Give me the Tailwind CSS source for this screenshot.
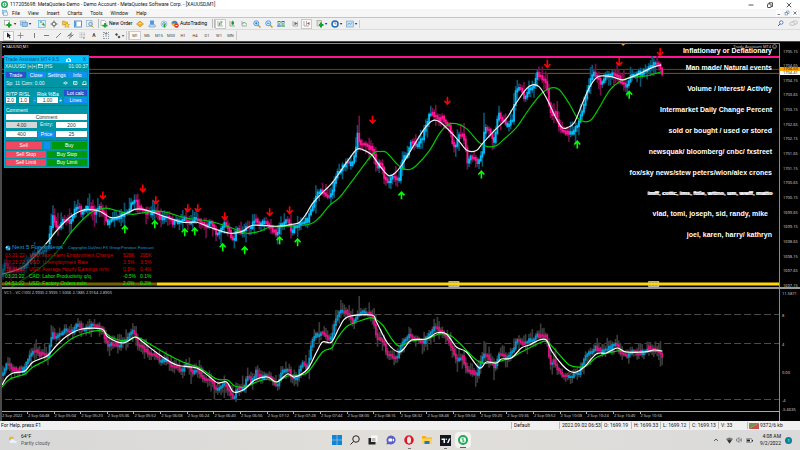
<!DOCTYPE html>
<html lang="en">
  <head>
    <meta charset="UTF-8" />
    <meta name="viewport" content="width=device-width, initial-scale=1.0" />
    <script src="https://cdn.jsdelivr.net/npm/@tailwindcss/browser@4"></script>
    <title>MetaTrader - XAUUSD,M1</title>
  </head>
  <body class="flex h-screen flex-col overflow-hidden bg-black font-['Roboto',sans-serif] text-[5px] leading-[7px] text-[#111]">
    <!-- Title bar -->
    <header class="flex h-[9px] shrink-0 items-center bg-white pl-px">
      <svg class="size-[7px]" viewBox="0 0 14 14"><circle cx="7" cy="7" r="5.5" fill="#fff" stroke="#22a85a" stroke-width="3" /><path d="M7 4v6M5 7h4" stroke="#22a85a" stroke-width="1.5" /></svg>
      <h1 class="ml-[2px] grow whitespace-nowrap">117205698: MetaQuotes-Demo - Demo Account - MetaQuotes Software Corp. - [XAUUSD,M1]</h1>
      <div class="flex gap-[13px] pr-2">
        <button aria-label="Minimize"><svg class="size-[6px]" viewBox="0 0 12 12"><path d="M1 6h10" stroke="#222" stroke-width="1.5" /></svg></button>
        <button aria-label="Restore"><svg class="size-[6px]" viewBox="0 0 12 12" fill="none" stroke="#222" stroke-width="1.5"><rect x="1" y="4" width="7" height="7" rx="1" /><path d="M4 4V1.5h7V9H8" /></svg></button>
        <button aria-label="Close"><svg class="size-[6px]" viewBox="0 0 12 12"><path d="M1.5 1.5l9 9m0-9l-9 9" stroke="#222" stroke-width="1.5" /></svg></button>
      </div>
    </header>

    <!-- Menu -->
    <nav class="flex h-[9px] shrink-0 items-center gap-2 border-b border-[#c4c4c4] bg-[#f6f6f6] pl-[2px]">
      <svg class="-mr-1 size-[6px]" viewBox="0 0 12 12"><rect x="1" y="1" width="8" height="7" fill="#cfe6fb" stroke="#4a90d0" /><rect x="3" y="4" width="8" height="7" fill="#e8f3fd" stroke="#4a90d0" /></svg>
      <a href="#">File</a><a href="#">View</a><a href="#">Insert</a><a href="#">Charts</a><a href="#">Tools</a><a href="#">Window</a><a href="#">Help</a>
      <div class="ml-auto flex gap-[2px] pr-[2px] text-[#3d5c80]">
        <button class="bg-white" aria-label="Minimize chart"><svg class="size-[6px]" viewBox="0 0 12 12"><path d="M3 9h5" stroke="currentColor" stroke-width="1.5" /></svg></button>
        <button class="bg-white" aria-label="Restore chart"><svg class="size-[6px]" viewBox="0 0 12 12" fill="none" stroke="currentColor"><rect x="2" y="5" width="5" height="5" /><path d="M5 5V2h5v5H7" /></svg></button>
        <button class="bg-white" aria-label="Close chart"><svg class="size-[6px]" viewBox="0 0 12 12"><path d="M3 3l6 6m0-6l-6 6" stroke="currentColor" stroke-width="1.5" /></svg></button>
      </div>
    </nav>

    <!-- Main toolbar -->
    <div class="flex h-[12px] shrink-0 items-center border-b border-[#dcdcdc] bg-[#f0f0f0] pl-[4px]">
      <button class="flex w-[16px] items-center" aria-label="New chart"><svg class="size-2" viewBox="0 0 16 16"><rect x="1" y="1" width="10" height="9" fill="#fff" stroke="#789" /><path d="M10 5v10M5 10h10" stroke="#12a526" stroke-width="4" /></svg><span class="ml-[2px] text-[4px]">▾</span></button>
      <button class="flex w-[18px] items-center" aria-label="Profiles"><svg class="size-2" viewBox="0 0 16 16"><rect x="1" y="2" width="11" height="8" fill="#d5e8f8" stroke="#5a96c8" /><rect x="4" y="5" width="11" height="8" fill="#9cc6ea" stroke="#3b7cb5" /></svg><span class="ml-px text-[4px]">▾</span></button>
      <button class="w-[12px]" aria-label="Market watch"><svg class="size-2" viewBox="0 0 16 16"><rect x="1" y="1" width="14" height="14" fill="#d9f0ff" stroke="#35a0e0" /><path d="M3 5l3-3 3 3zM8 8h5v5z" fill="#12a526" /><path d="M7 9l5-4v5z" fill="#e0561f" /></svg></button>
      <button class="w-[12px]" aria-label="Data window"><svg class="size-2" viewBox="0 0 16 16" fill="none" stroke="#555"><circle cx="8" cy="8" r="4" stroke-width="1.5" /><path d="M8 1v5M8 10v5M1 8h5M10 8h5" stroke-width="1.5" /></svg></button>
      <button class="w-[12px]" aria-label="Navigator"><svg class="size-2" viewBox="0 0 16 16"><path d="M1 2h4l1 2h5v6H1z" fill="#f4c542" stroke="#b88a1a" /><path d="M10 6l2 3h3l-2 2 1 4-4-2-4 2 1-4-2-2h3z" fill="#ffe14a" stroke="#b88a1a" /></svg></button>
      <button class="w-[12px]" aria-label="Terminal"><svg class="size-2" viewBox="0 0 16 16"><rect x="1" y="2" width="14" height="12" fill="#fff" stroke="#2673bf" stroke-width="1.5" /><path d="M1 3h4v10H1z" fill="#579dde" /></svg></button>
      <button class="w-[12px]" aria-label="Strategy tester"><svg class="size-2" viewBox="0 0 16 16"><rect x="1" y="1" width="11" height="12" fill="#e6f0f8" stroke="#7b9ab5" /><circle cx="9" cy="8" r="3.5" fill="#cdeafc" stroke="#4585b8" stroke-width="1.5" /><path d="M11 11l4 4" stroke="#c79621" stroke-width="2" /></svg></button>
      <span class="h-[9px] w-[2px] border-l border-[#bbb]"></span>
      <button class="flex w-[36px] items-center gap-px whitespace-nowrap text-black"><svg class="size-2" viewBox="0 0 16 16"><path d="M2 1h7l3 3v7H2z" fill="#fff" stroke="#789" /><path d="M10 6v9M5 11h10" stroke="#12a526" stroke-width="3.5" /></svg>New Order</button>
      <button class="w-[12px]" aria-label="Editor"><svg class="size-2" viewBox="0 0 16 16"><path d="M1 8l7-6 7 6-7 6z" fill="#f0b12c" stroke="#ba7b10" /><path d="M4 8l4-3 4 3z" fill="#ffe38a" /></svg></button>
      <button class="w-[12px]" aria-label="Hosting"><svg class="size-2" viewBox="0 0 16 16"><rect x="4" y="1" width="8" height="8" fill="#4d9be6" /><path d="M2 13a3 3 0 013-4h6a3 3 0 013 5H2z" fill="#b9d9f3" stroke="#4484bb" /></svg></button>
      <button class="w-[11px]" aria-label="Signals"><svg class="size-2" viewBox="0 0 16 16" fill="none"><circle cx="8" cy="8" r="6" stroke="#86b4d8" stroke-width="1.5" /><circle cx="8" cy="8" r="3" stroke="#4c96cd" stroke-width="1.5" /><path d="M9 7v8" stroke="#24a53a" stroke-width="3" /></svg></button>
      <button class="flex w-[41px] items-center gap-px whitespace-nowrap text-black"><svg class="size-2 shrink-0" viewBox="0 0 16 16"><circle cx="7" cy="7" r="6" fill="#f1bb38" /><path d="M1 7a6 5 0 0112 0z" fill="#3a84c5" /><circle cx="11" cy="11" r="4.5" fill="#e12d1d" /><rect x="9" y="10" width="4" height="2" fill="#fff" /></svg>AutoTrading</button>
      <span class="h-[9px] w-[3px] border-x border-[#bbb]"></span>
      <button class="flex h-[10px] w-[11px] items-center justify-center border border-[#c8c8c8] bg-[#fafafa]" aria-label="Bar chart"><svg class="size-[7px] shrink-0" viewBox="0 0 14 14" fill="none"><path d="M2 2v10h10" stroke="#666" /><path d="M5 5v6M8 2v8M8 4h3" stroke="#179b2b" stroke-width="1.5" /></svg></button>
      <button class="flex w-[12px] justify-center" aria-label="Candlesticks"><svg class="size-[7px]" viewBox="0 0 14 14"><path d="M2 2v10h10" stroke="#666" fill="none" /><path d="M7 1v10" stroke="#179b2b" /><rect x="5" y="3" width="5" height="6" fill="#179b2b" /></svg></button>
      <button class="flex w-[12px] justify-center" aria-label="Line chart"><svg class="size-[7px]" viewBox="0 0 14 14" fill="none"><path d="M2 2v10h10" stroke="#666" /><path d="M3 8c2-5 5-3 9 1" stroke="#179b2b" stroke-width="1.5" /></svg></button>
      <button class="ml-px flex w-[12px] justify-center" aria-label="Zoom in"><svg class="size-2" viewBox="0 0 16 16"><path d="M9 9l6 6" stroke="#d1a11c" stroke-width="3" /><circle cx="6.5" cy="6.5" r="5" fill="#d3ecff" stroke="#3180d6" stroke-width="1.5" /><path d="M4 6.5h5M6.5 4v5" stroke="#1767bd" stroke-width="1.5" /></svg></button>
      <button class="flex w-[12px] justify-center" aria-label="Zoom out"><svg class="size-2" viewBox="0 0 16 16"><path d="M9 9l6 6" stroke="#d1a11c" stroke-width="3" /><circle cx="6.5" cy="6.5" r="5" fill="#d3ecff" stroke="#3180d6" stroke-width="1.5" /><path d="M4 6.5h5" stroke="#1767bd" stroke-width="1.5" /></svg></button>
      <button class="flex w-[12px] justify-center" aria-label="Tile windows"><svg class="size-2" viewBox="0 0 16 16"><path d="M1 2h6v5H1zM9 9h6v5H9z" fill="#26a330" /><path d="M9 2h6v5H9zM1 9h6v5H1z" fill="#2a66c8" /><path d="M2 5h4M10 5h4M2 12h4M10 12h4" stroke="#fff" stroke-width="1.5" /></svg></button>
      <button class="ml-[2px] flex w-[12px] justify-center" aria-label="Auto scroll"><svg class="size-[7px]" viewBox="0 0 14 14"><path d="M2 2v10h10" stroke="#666" fill="none" /><path d="M5 4v6M11 3v8" stroke="#666" /><path d="M6 4l5 3-5 3z" fill="#179b2b" /></svg></button>
      <button class="flex h-[10px] w-[11px] items-center justify-center border border-[#c8c8c8] bg-[#fafafa]" aria-label="Chart shift"><svg class="size-[7px] shrink-0" viewBox="0 0 14 14"><path d="M2 2v10h10" stroke="#666" fill="none" /><path d="M7 2v9" stroke="#666" /><path d="M13 4l-5 3 5 3z" fill="#b5432c" /></svg></button>
      <button class="ml-1 flex w-[15px] items-center" aria-label="Indicators"><svg class="size-2" viewBox="0 0 16 16"><rect x="2" y="1" width="9" height="11" fill="#ddd" stroke="#888" /><path d="M10 5v10M6 10h9" stroke="#12a526" stroke-width="4" /></svg><span class="ml-px text-[4px]">▾</span></button>
      <button class="flex w-[15px] items-center" aria-label="Periods"><svg class="size-2" viewBox="0 0 16 16"><circle cx="8" cy="8" r="6" fill="#fff" stroke="#1b6dc2" stroke-width="3" /><path d="M8 4v4h3" fill="none" stroke="#333" /></svg><span class="ml-px text-[4px]">▾</span></button>
      <button class="flex w-[14px] items-center border-r border-[#ccc]" aria-label="Templates"><svg class="size-2" viewBox="0 0 16 16"><rect x="1" y="2" width="14" height="12" fill="#c8e0f5" stroke="#5d8cb5" /><path d="M3 10l3-4 3 3 4-5" fill="none" stroke="#3378b8" /></svg><span class="ml-px text-[4px]">▾</span></button>
      <button class="ml-auto w-[12px]" aria-label="Search"><svg class="size-[7px]" viewBox="0 0 14 14"><circle cx="8.5" cy="5" r="3.5" fill="#fff" stroke="#2861c2" stroke-width="1.5" /><path d="M6 8l-4 4" stroke="#2861c2" stroke-width="2" /></svg></button>
      <button class="mr-[2px] w-[9px]" aria-label="Chat"><svg class="h-[7px] w-[9px]" viewBox="0 0 18 14" fill="#eee" stroke="#999"><ellipse cx="12" cy="5" rx="5" ry="3.5" /><ellipse cx="6.5" cy="7.5" rx="5" ry="3.5" /></svg></button>
    </div>

    <!-- Drawing tools and periods -->
    <div class="flex h-[11px] shrink-0 items-center bg-[#f0f0f0] pl-[3px] text-[#444]">
      <button class="flex h-[10px] w-[11px] items-center justify-center border border-[#c8c8c8] bg-[#fafafa]" aria-label="Cursor"><svg class="size-[7px] shrink-0" viewBox="0 0 14 14"><path d="M4 1v10l3-2 2 4 2-1-2-4h3z" fill="#222" /></svg></button>
      <button class="flex w-[12px] justify-center" aria-label="Crosshair"><svg class="size-[7px]" viewBox="0 0 14 14"><path d="M7 1v12M1 7h12" stroke="#777" stroke-width="1.5" /></svg></button>
      <button class="ml-[2px] flex w-[12px] justify-center" aria-label="Vertical line"><svg class="size-[7px]" viewBox="0 0 14 14"><path d="M7 2v10" stroke="#555" stroke-width="1.5" /></svg></button>
      <button class="flex w-[12px] justify-center" aria-label="Horizontal line"><svg class="size-[7px]" viewBox="0 0 14 14"><path d="M2 7h10" stroke="#555" stroke-width="1.5" /></svg></button>
      <button class="flex w-[12px] justify-center" aria-label="Trendline"><svg class="size-[7px]" viewBox="0 0 14 14"><path d="M2 12L12 2" stroke="#555" stroke-width="1.5" /></svg></button>
      <button class="flex w-[12px] justify-center" aria-label="Channel"><svg class="size-[7px]" viewBox="0 0 14 14" fill="none" stroke="#555" stroke-width="1.5"><path d="M1 9l9-8M4 13l9-8M3 7l6 1M6 4l5 3" /></svg></button>
      <button class="flex w-[12px] justify-center" aria-label="Fibonacci"><svg class="size-[7px]" viewBox="0 0 14 14" fill="none" stroke="#888"><path d="M1 2h12M1 5h12M1 8h12M1 11h8" stroke-dasharray="2 1" /><path d="M10 10v4" stroke-width="2" /></svg></button>
      <button class="w-[12px] font-bold">A</button>
      <button class="flex w-[12px] justify-center" aria-label="Label"><span class="border border-dotted border-[#999] px-px leading-[5px]">T</span></button>
      <button class="flex w-[14px] items-center pl-[2px]" aria-label="Arrows"><svg class="size-[7px]" viewBox="0 0 14 14"><path d="M2 5l3-3 3 3-3 3zM7 10l3-3 3 3-3 3z" fill="#444" /></svg><span class="ml-px text-[4px]">▾</span></button>
      <span class="h-[9px] w-[3px] border-x border-[#ccc]"></span>
      <div class="flex border-r border-[#ccc] text-[4px]">
        <button class="w-[12px] border border-[#ccc] bg-[#fafafa]">M1</button><button class="w-[12px]">M5</button><button class="w-[12px]">M15</button><button class="w-[12px]">M30</button><button class="w-[12px]">H1</button><button class="w-[12px]">H4</button><button class="w-[12px]">D1</button><button class="w-[12px]">W1</button><button class="w-[11px]">MN</button>
      </div>
    </div>

    <!-- Charts -->
    <main class="flex min-h-0 flex-1 flex-col border-t border-l-2 border-[#4a4a4a] bg-black font-['Open_Sans',sans-serif] text-[4px] leading-[5px] text-[#ddd]">
      <section class="relative flex min-h-0 flex-[245]">
        <div class="relative mt-px flex-1 border-t border-r border-[#8a8a8a]">
          <svg id="price" class="absolute inset-0 size-full" viewBox="2 43 778 244" preserveAspectRatio="none" fill="none"></svg>
          <p class="absolute top-0 left-px text-white">▾ XAUUSD,M1</p>
          <p class="absolute top-0 right-[2px] flex items-center gap-px leading-[4px] whitespace-nowrap">Trade Assistant MT4 <svg class="size-[5px]" viewBox="0 0 10 10" fill="none" stroke="#ccc"><circle cx="5" cy="5" r="4" /><path d="M3 6q2 2 4 0M3.5 3.5v1M6.5 3.5v1" /></svg></p>

          <!-- Notes -->
          <ul class="absolute top-[3px] right-[7px] text-right font-['Liberation_Sans',sans-serif] text-[7px] leading-[8px] font-bold whitespace-nowrap text-white">
            <li class="mb-[9px]">Inflationary or Deflationary</li>
            <li class="mb-[13px]">Man made/ Natural events</li>
            <li class="mb-[13px]">Volume / Interest/ Activity</li>
            <li class="mb-[13px]">Intermarket Daily Change Percent</li>
            <li class="mb-[13px]">sold or bought / used or stored</li>
            <li class="mb-[13px]">newsquak/ bloomberg/ cnbc/ fxstreet</li>
            <li class="mb-[12px]">fox/sky news/stew peters/wion/alex crones</li>
            <li class="mb-[13px] text-[6px] [text-shadow:1px_0_#fff]">imff, cottc, ims, fttle, wttno, um, wwff, matto</li>
            <li class="mr-1 mb-[13px]">vlad, tomi, joseph, sid, randy, mike</li>
            <li>joel, karen, harry/ kathryn</li>
          </ul>

          <!-- News -->
          <div class="absolute bottom-0 left-0 w-[155px] bg-black/55 pl-[3px] font-['Liberation_Sans',sans-serif] text-[5px] leading-[7px] whitespace-nowrap">
            <div class="flex items-center text-[#1b9fd8]">
              <svg class="size-[6px]" viewBox="0 0 12 12"><circle cx="6" cy="6" r="5" fill="#167db5" /><path d="M3 2l3 2-2 3-3-2zM7 6l3 1-2 4z" fill="#a9dcf5" /></svg>
              <h2 class="ml-px w-[56px] text-[6px]">Next 5 Forex News</h2>
              <span class="w-[53px] text-[4px]">Copyrights DaVinci FX Group</span>
              <span class="w-[17px] text-[4px]">Previous</span><span class="text-[4px]">Forecast</span>
            </div>
            <table class="mt-px w-full text-left">
              <tbody class="text-[#d80000]">
                <tr><td class="w-[24px]">03:21:22</td><td>USD: Non-Farm Employment Change</td><td class="w-[17px]">528K</td><td class="w-[17px]">295K</td></tr>
                <tr><td>03:21:22</td><td>USD: Unemployment Rate</td><td>3.5%</td><td>3.5%</td></tr>
                <tr><td>03:21:22</td><td>USD: Average Hourly Earnings m/m</td><td>0.5%</td><td>0.4%</td></tr>
              </tbody>
              <tbody class="text-[#00f000]">
                <tr><td>03:21:22</td><td>CAD: Labor Productivity q/q</td><td>-0.5%</td><td>0.1%</td></tr>
                <tr><td>04:51:22</td><td>USD: Factory Orders m/m</td><td>2.0%</td><td>0.2%</td></tr>
              </tbody>
            </table>
          </div>

          <!-- Trade panel -->
          <form class="absolute top-[11px] left-[2px] w-[85px] border border-[#00a8d8] bg-[#0096a6] font-['Liberation_Sans',sans-serif] text-[5px] leading-[5px] text-white">
            <div class="flex h-[7px] items-center bg-[#00bfff] text-[#134a68]">
              <h2 class="grow whitespace-nowrap">Trade Assistant MT4 9.5</h2>
              <svg class="mr-[12px] h-[4px] w-[5px]" viewBox="0 0 10 8"><path d="M0 2h3l1-2h3l1 2h2v6H0z" fill="#e8f8ff" /><circle cx="5" cy="4.5" r="1.8" fill="#00a0d8" /></svg>
              <span class="mr-[2px]">X</span>
            </div>
            <div class="flex h-[6px] items-center gap-px whitespace-nowrap text-[#e0f7fa]">
              <span>XAUUSD |+|+|</span>
              <svg class="h-[4px] w-[5px]" viewBox="0 0 10 8"><path d="M0 0h4l1 1h5v7H0z" fill="#e0f7fa" /><path d="M1 3h8v4H1z" fill="#0096a6" /></svg>
              <span class="grow">|HS</span><span>01:00:37</span>
            </div>
            <div class="mt-[3px] grid grid-cols-4 gap-px px-px text-center">
              <button type="button" class="h-[6px] bg-[#2a50d0]">Trade</button>
              <button type="button" class="h-[6px] bg-[#1090f0]">Close</button>
              <button type="button" class="h-[6px] bg-[#1090f0]">Settings</button>
              <button type="button" class="h-[6px] bg-[#1090f0]">Info</button>
            </div>
            <div class="mt-[2px] flex h-[6px] items-center px-px text-[#e0f7fa]">
              <span class="grow whitespace-nowrap">Sp: 11 Com: 0.00</span>
              <svg class="h-[4px] w-[24px]" viewBox="0 0 48 8" fill="none" stroke="#e0f7fa" stroke-width="1.5"><path d="M1 4q4-5 8 0-4 5-8 0zM4 4h2M21 1h7v6h-7zM23 3l1.5 2L26 3M40 7V3a3 2.5 0 016 0v4zM38 7h9" /></svg>
            </div>
            <div class="mt-px flex h-[18px] items-end gap-px border-t border-[#007f90] px-px pb-[2px]">
              <label class="w-[12px] whitespace-nowrap">R/TP<input value="2.0" class="block h-[6px] w-[10px] bg-white pl-px text-[#333]" /></label>
              <label class="w-[13px] whitespace-nowrap">R/SL<input value="1.0" class="block h-[6px] w-[10px] bg-white pl-px text-[#333]" /></label>
              <button type="button" class="h-[6px] w-[3px] bg-[#1090f0]">-</button>
              <label class="w-[21px] text-center whitespace-nowrap">Risk %Ba<input value="1.00" class="block h-[6px] w-full bg-white text-center text-[#333]" /></label>
              <button type="button" class="h-[6px] w-[3px] bg-[#1090f0]">+</button>
              <div class="ml-px flex grow flex-col gap-px">
                <button type="button" class="h-[6px] bg-[#2a50d0]">Lot calc</button>
                <button type="button" class="h-[6px] bg-[#1090f0]">Lines</button>
              </div>
            </div>
            <div class="border-t border-[#007f90] px-px pt-[2px]">
              <label for="comment">Comment</label>
              <input id="comment" value="Comment" class="mt-px block h-[6px] w-full bg-white text-center text-[#333]" />
            </div>
            <div class="mt-[2px] grid grid-cols-[31px_17px_31px] justify-between gap-y-[3px] px-px text-center">
              <input aria-label="Lot" value="4.00" class="h-[6px] bg-[#d5d5d5] text-center text-[#333]" />
              <span class="text-[#e0f7fa]">Entry:</span>
              <input aria-label="Entry" value="200" class="h-[6px] bg-white text-center text-[#333]" />
              <input aria-label="Take profit" value="400" class="h-[6px] bg-white text-center text-[#333]" />
              <button type="button" class="h-[6px] bg-[#1090f0]">Price</button>
              <input aria-label="Stop loss" value="25" class="h-[6px] bg-white text-center text-[#333]" />
            </div>
            <div class="mt-[3px] border-t border-[#007f90] px-px pt-px pb-px">
              <div class="flex gap-[2px]">
                <button type="button" class="h-[7px] flex-1 bg-[#f04860]">Sell</button>
                <button type="button" class="h-[7px] w-[6px] bg-[#1090f0]" aria-label="Options"></button>
                <button type="button" class="h-[7px] flex-1 bg-[#00980c]">Buy</button>
              </div>
              <div class="mt-[2px] grid grid-cols-2 gap-px">
                <button type="button" class="h-[7px] bg-[#f04860]">Sell Stop</button>
                <button type="button" class="h-[7px] bg-[#00980c]">Buy Stop</button>
                <button type="button" class="h-[7px] bg-[#f04860]">Sell Limit</button>
                <button type="button" class="h-[7px] bg-[#00980c]">Buy Limit</button>
              </div>
            </div>
          </form>
        </div>
        <div id="price-axis" class="relative w-5"></div>
      </section>

      <section class="relative flex min-h-0 flex-[122] border-t-2 border-[#9a9a9a]">
        <div class="relative flex-1 border-r border-[#8a8a8a]">
          <svg id="indicator" class="absolute inset-0 size-full" viewBox="2 289 778 122" preserveAspectRatio="none" fill="none"></svg>
          <p class="absolute top-px left-[2px] whitespace-nowrap">VC1: - VC (100) 2.9935 2.9935 1.5006 2.1885 2.9164 2.8905</p>
        </div>
        <div id="indicator-axis" class="relative w-5"></div>
      </section>

      <div class="flex h-[10px] shrink-0 pr-5">
        <div id="times" class="relative flex-1 border-t border-r border-[#aaa]"></div>
      </div>
    </main>

    <!-- Status bar -->
    <div class="flex h-[9px] shrink-0 items-center bg-[#f0f0f0] pl-px whitespace-nowrap">
      <span class="grow">For Help, press F1</span>
      <span class="w-[48px] border-l border-[#bbb] pl-[2px]">Default</span>
      <span class="w-[42px] border-l border-[#bbb] pl-[2px]">2022.09.02 06:53</span>
      <span class="w-[30px] border-l border-[#bbb] pl-[2px]">O: 1699.19</span>
      <span class="w-[29px] border-l border-[#bbb] pl-[2px]">H: 1699.33</span>
      <span class="w-[29px] border-l border-[#bbb] pl-[2px]">L: 1699.12</span>
      <span class="w-[29px] border-l border-[#bbb] pl-[2px]">C: 1699.13</span>
      <span class="w-[29px] border-l border-[#bbb] pl-[2px]">V: 33</span>
      <span class="flex w-[53px] items-center gap-px border-l border-[#bbb] pl-px"><svg class="h-[6px] w-[10px]" viewBox="0 0 20 12"><path d="M0 0h20L0 12z" fill="#6f9350" /><path d="M20 0v12H0z" fill="#c9504a" /></svg>9372/6 kb</span>
    </div>

    <!-- Taskbar -->
    <footer class="grid h-5 shrink-0 grid-cols-[1fr_auto_1fr] items-center bg-linear-to-r from-[#d8d8d8] via-[#e2dfda] to-[#dadada]">
      <div class="flex items-center gap-1 pl-2">
        <svg class="size-[9px]" viewBox="0 0 18 18"><circle cx="7" cy="6" r="5" fill="#f6b21b" /><path d="M4 15a4 4 0 011-7 5 5 0 019 1 3 3 0 012 6z" fill="#e9f2fb" stroke="#b8cfe5" /></svg>
        <p>64°F<br /><span class="text-[#555]">Partly cloudy</span></p>
      </div>
      <div class="flex items-center gap-[2px]">
        <button class="flex size-4 items-center justify-center" aria-label="Start"><svg class="size-[10px]" viewBox="0 0 20 20" fill="#0f85d8"><path d="M0 0h9.5v9.5H0zM10.5 0H20v9.5h-9.5zM0 10.5h9.5V20H0zM10.5 10.5H20V20h-9.5z" /></svg></button>
        <button class="flex size-4 items-center justify-center" aria-label="Search"><svg class="size-[10px]" viewBox="0 0 20 20" fill="none" stroke="#222" stroke-width="2"><circle cx="12" cy="8" r="6.5" /><path d="M7 13l-6 6" /></svg></button>
        <button class="flex size-4 items-center justify-center" aria-label="Task view"><svg class="size-[10px]" viewBox="0 0 20 20"><path d="M6 1h13v13H6z" fill="#f8f8f8" /><path d="M1 6h5v8h9v5H1z" fill="#222" /><path d="M7 6h8v7H7z" fill="#bbb" /></svg></button>
        <button class="flex size-4 items-center justify-center" aria-label="Chat"><svg class="size-[10px]" viewBox="0 0 20 20"><path d="M10 1a9 9 0 11-4 17l-5 1 1-5A9 9 0 0110 1z" fill="#5a5fc7" /><rect x="5" y="7" width="7" height="6" rx="1" fill="#fff" /><path d="M12 10l4-3v6z" fill="#fff" /></svg></button>
        <button class="relative flex size-4 items-center justify-center" aria-label="Opera"><svg class="size-[10px]" viewBox="0 0 20 20"><circle cx="10" cy="10" r="9.5" fill="#e3152a" /><ellipse cx="10" cy="10" rx="4" ry="7" fill="#f1e8e6" /></svg><i class="absolute -bottom-px h-px w-[3px] bg-[#777]"></i></button>
        <button class="flex size-4 items-center justify-center" aria-label="Explorer"><svg class="size-[10px]" viewBox="0 0 20 20"><path d="M0 2h7l2 3h11v13H0z" fill="#f2b118" /><path d="M0 7h20v11H0z" fill="#ffd45a" /><path d="M5 12h10v6H5z" fill="#1e78c8" /></svg></button>
        <button class="relative flex size-4 items-center justify-center" aria-label="TradingView"><svg class="size-[11px]" viewBox="0 0 22 22"><path d="M0 0h22v22H0z" fill="#131722" /><path d="M3 7h7v9H7v-6H3zM14 16l4-9h3l-4 9z" fill="#fff" /><circle cx="12.5" cy="8.5" r="1.5" fill="#fff" /></svg><i class="absolute -bottom-px h-px w-[3px] bg-[#777]"></i></button>
        <button class="relative flex size-4 items-center justify-center rounded-sm bg-white/60" aria-label="MetaTrader"><svg class="size-[10px]" viewBox="0 0 20 20"><circle cx="10" cy="10" r="8" fill="#fff" stroke="#22a85a" stroke-width="4" /><path d="M10 5v10M7 8h3M10 12h3" stroke="#22a85a" stroke-width="2" /></svg><i class="absolute bottom-0 h-px w-[6px] bg-[#127a8a]"></i></button>
      </div>
      <div class="flex items-center justify-end gap-[3px] pr-2">
        <svg class="mr-1 size-[6px]" viewBox="0 0 12 12"><path d="M2 8l4-4 4 4" fill="none" stroke="#333" stroke-width="1.5" /></svg>
        <svg class="size-[7px]" viewBox="0 0 14 14"><path d="M0 4q7-6 14 0L7 13z" fill="#777" /><path d="M3 7q4-3 8 0L7 13z" fill="#333" /></svg>
        <svg class="size-[6px]" viewBox="0 0 12 12" fill="none" stroke="#444"><path d="M1 4h2l3-3v10L3 8H1zM8 4q2 2 0 4M10 2q3 4 0 8" /></svg>
        <svg class="ml-px h-[5px] w-[7px]" viewBox="0 0 14 10"><rect x=".5" y="1.5" width="11" height="7" rx="1" fill="#fff" stroke="#222" /><path d="M2 3h6v4H2zM12 4h2v3h-2z" fill="#222" /></svg>
        <p class="ml-1 text-right">4:08 AM<br />9/2/2022</p>
        <span class="ml-px flex size-[7px] items-center justify-center rounded-full bg-[#0f7f92] text-[4px] text-white">1</span>
      </div>
    </footer>

    <script>
      const UP = "#00bfff";
      const DOWN = "#ff1493";

      // x,y pairs of each series
      const priceData = "2,276 5,262 10,270 21,270 25,267 33,253 40,252 48,247 51,227 53,217 55,223 58,228 63,220 72,222 75,210 79,207 82,213 87,208 92,207 95,212 100,205 104,213 107,223 112,218 120,217 128,210 136,198 138,207 145,212 150,213 156,210 160,218 167,217 173,222 180,221 185,218 190,223 197,217 202,223 207,225 212,223 215,228 217,234 220,230 225,223 230,233 234,241 237,230 242,232 247,225 251,228 255,220 260,224 265,222 270,227 277,233 282,223 288,220 292,232 297,225 303,222 308,220 312,207 317,195 322,190 325,193 331,197 335,180 338,172 347,163 352,163 355,155 358,133 360,140 363,145 373,148 377,167 382,163 385,180 390,182 393,177 400,180 402,160 408,153 412,140 417,145 423,137 427,122 431,112 437,118 443,118 450,125 453,143 457,145 460,132 465,138 468,160 473,157 479,163 483,153 485,127 490,130 495,140 499,113 503,118 507,125 513,120 516,90 522,88 525,97 530,88 535,83 538,73 543,78 547,82 550,107 552,113 557,113 560,127 567,133 572,133 577,127 582,113 588,92 592,77 595,70 598,78 602,83 607,75 613,73 618,75 623,83 627,85 632,75 638,73 643,72 648,68 653,65 658,62 661,67 663,72";
      const priceFast = "2,274 23,267 43,247 57,230 70,217 80,211 88,209 100,211 110,217 117,217 127,213 135,209 143,209 153,212 167,217 183,222 197,222 210,227 230,233 243,231 253,225 277,226 293,224 300,222 307,213 313,203 323,192 333,182 347,162 357,149 363,149 372,154 380,165 389,175 395,173 402,165 413,147 425,128 433,120 440,121 450,130 460,141 468,150 477,150 483,143 495,130 507,118 517,102 527,88 533,84 540,86 547,97 557,118 563,127 568,127 575,122 583,103 590,87 597,77 603,75 613,76 623,79 630,77 640,73 650,68 658,65 662,64";
      const priceSlow = "10,288 33,273 47,262 60,248 73,230 90,213 100,209 108,208 123,212 133,214 153,211 167,212 187,218 210,221 230,227 247,233 260,231 270,227 287,226 310,224 320,217 330,205 340,197 353,180 367,161 375,152 381,151 387,152 397,163 403,168 410,169 417,165 430,150 440,133 448,124 457,123 467,128 480,142 488,146 497,145 503,140 517,127 530,108 543,92 552,87 560,89 570,103 578,117 585,121 592,119 600,107 610,90 620,81 630,77 647,75 662,71";
      const indData = "3,375 7,364 12,369 23,370 28,358 33,351 40,354 48,355 52,333 55,337 62,332 67,329 72,333 75,327 80,325 83,330 93,326 102,327 107,345 112,343 120,345 127,338 134,330 138,343 147,352 155,355 160,362 167,360 173,367 182,370 187,365 193,374 198,370 203,378 213,382 217,392 222,385 225,382 230,393 234,402 237,388 243,388 248,377 252,382 256,372 262,378 267,375 272,378 277,387 282,372 290,369 292,380 297,377 303,365 308,367 312,343 315,337 322,332 327,338 332,340 335,322 342,310 347,312 353,322 358,315 367,312 373,318 377,337 383,340 388,357 398,357 403,342 410,335 417,340 425,342 430,332 435,328 443,332 450,343 457,360 463,357 468,370 478,375 484,352 490,360 495,367 500,353 507,358 513,352 517,342 527,342 532,340 538,335 547,337 551,363 555,360 560,372 567,377 573,376 580,372 585,357 592,352 597,347 602,353 610,348 617,343 622,353 628,357 633,352 643,353 648,348 660,350 663,358";
      const indFast = "2,385 7,377 13,373 25,371 33,362 47,356 57,345 67,336 82,329 102,329 108,337 123,343 135,337 143,342 160,355 177,365 197,368 210,377 218,383 227,382 234,392 245,389 255,380 268,377 277,382 288,374 295,377 308,369 317,352 323,342 332,342 340,327 348,317 372,315 377,322 388,343 399,352 405,348 412,340 427,339 437,333 447,334 457,347 467,352 480,368 487,362 497,363 502,359 512,358 522,348 530,345 540,340 547,340 553,352 563,365 570,371 577,372 585,367 597,354 607,353 618,348 627,352 645,352 655,350 663,351";
      const indSlow = "2,387 10,379 25,374 33,367 48,359 60,348 73,338 90,332 102,331 113,338 127,341 137,337 150,344 167,354 183,362 200,368 217,379 228,380 235,386 245,387 257,382 268,379 277,382 288,376 302,375 310,370 323,352 332,348 338,338 348,326 363,320 373,318 383,325 393,340 400,346 412,341 427,339 440,334 450,335 460,343 480,362 497,362 513,357 522,352 530,348 540,343 548,342 563,358 570,365 578,367 587,366 598,357 618,351 630,352 663,351";

      const sells = [[103,195],[143,188],[156,200],[188,208],[198,208],[225,216],[270,212],[290,210],[373,119],[448,100],[548,63],[620,61],[661,51]];
      const buys = [[125,229],[155,224],[185,232],[195,231],[223,247],[245,250],[280,240],[298,242],[402,195],[482,174],[578,144],[630,94]];

      let seed = 7;
      function rnd() {
        seed = (seed * 16807) % 2147483647;
        return seed / 2147483647;
      }

      function parse(text) {
        return text.split(" ").map((p) => p.split(",").map(Number));
      }

      function valueAt(points, x) {
        if (x <= points[0][0]) return points[0][1];
        for (let i = 1; i < points.length; i++) {
          const [x1, y1] = points[i];
          const [x0, y0] = points[i - 1];
          if (x <= x1) return y0 + ((y1 - y0) * (x - x0)) / (x1 - x0);
        }
        return points[points.length - 1][1];
      }

      // one candle per minute, 16 minutes between time labels
      function candles(text, up, down, wickUp, wickDown, spikes) {
        const points = parse(text);
        const step = 80 / 48;
        let wicks = "";
        let bodies = "";
        let open = points[0][1];
        for (let x = 3; x < 664; x += step) {
          const close = valueAt(points, x) + (rnd() - 0.5) * 4;
          const rising = valueAt(points, x + 1) - valueAt(points, x - 1.5) < 0;
          const top = Math.min(open, close) - 1;
          const bottom = Math.max(open, close) + 1;
          let high = top - 1 - rnd() * rnd() * 12;
          const low = bottom + 1 + rnd() * rnd() * 12;
          spikes.forEach(([sx, sy]) => {
            if (Math.abs(sx - x) < step / 2) high = sy;
          });
          wicks += `<path d="M${x} ${high}V${low}" stroke="${rising ? wickUp : wickDown}" stroke-width="1.6"/>`;
          bodies += `<path d="M${x} ${top}V${bottom}" stroke="${rising ? up : down}" stroke-width="1.8"/>`;
          open = close;
        }
        return wicks + bodies;
      }

      // smooth line through the points
      function curve(text, color) {
        const p = parse(text);
        let d = `M${p[0]}`;
        for (let i = 0; i < p.length - 1; i++) {
          const a = p[i - 1] || p[i];
          const b = p[i];
          const c = p[i + 1];
          const e = p[i + 2] || c;
          d += `C${b[0] + (c[0] - a[0]) / 6} ${b[1] + (c[1] - a[1]) / 6} ${c[0] - (e[0] - b[0]) / 6} ${c[1] - (e[1] - b[1]) / 6} ${c}`;
        }
        return `<path d="${d}" stroke="${color}" stroke-width="1.2"/>`;
      }

      function hline(y, color, width) {
        return `<path d="M2 ${y}H780" stroke="${color}" stroke-width="${width}"/>`;
      }

      const tag = (x) => `<rect x="${x - 5}" y="281" width="11" height="6" fill="#b5b5b5"/><path d="M${x - 4} 282.5h9M${x - 4} 285.5h9" stroke="#777" stroke-dasharray="2 1"/>`;

      document.getElementById("price").innerHTML =
        hline(56, "#ff1493", 2) +
        hline(68.5, "#6e4400", 1) +
        hline(72.5, "#8a5600", 1) +
        candles(priceData, UP, DOWN, "#0a5674", "#7d0d4a", [[53, 205], [89, 193], [136, 194], [359, 115], [431, 105], [485, 112], [499, 105], [538, 69], [592, 66]]) +
        curve(priceSlow, "#00c800") +
        curve(priceFast, "#f0f0f0") +
        tag(454) + tag(654) +
        hline(284, "#ffd800", 3) +
        sells.map(([x, y]) => `<path d="M${x} ${y - 4}v7M${x - 3} ${y}l3 3.3l3-3.3" stroke="#f00" stroke-width="1.6"/>`).join("") +
        buys.map(([x, y]) => `<path d="M${x} ${y + 4}v-7M${x - 3} ${y}l3-3.3l3 3.3" stroke="#0f0" stroke-width="1.6"/>`).join("") +
        `<path d="M622 43h4l-2 2z" fill="#e0a030"/>`;

      document.getElementById("indicator").innerHTML =
        [314.5, 343.5, 399.5].map((y) => `<path d="M5 ${y}H780" stroke="#4a4a4a" stroke-dasharray="7 3"/>`).join("") +
        candles(indData, "#0098d4", "#dc107e", "#3c3c3c", "#3c3c3c", [[52, 325], [89, 319], [134, 326], [199, 360], [342, 300], [359, 296], [410, 327], [440, 321], [484, 341]]) +
        curve(indSlow, "#00d800") +
        curve(indFast, "#fff");

      // price scale
      let labels = "";
      for (let i = 0; i < 17; i++) {
        const y = 50.5 + i * 14.65;
        labels += `<span class="absolute left-[3px] -translate-y-1/2" style="top:${((y - 42) / 245) * 100}%">${(1705.15 - i * 0.5).toFixed(2)}</span>`;
      }
      labels += `<span class="absolute left-0 w-full -translate-y-1/2 bg-[#ffa500] pl-[3px] leading-[4px] text-black" style="top:${(26.5 / 245) * 100}%">1704.53</span>`;
      labels += `<span class="absolute left-0 w-full -translate-y-1/2 bg-white pl-[3px] leading-[4px] text-black" style="top:${(30.5 / 245) * 100}%">1704.41</span>`;
      document.getElementById("price-axis").innerHTML = labels;

      document.getElementById("indicator-axis").innerHTML = [["11.5871", 292.5], ["8", 314.5], ["4", 343.5], ["0.00", 371.5], ["-4", 399.5], ["-5.6635", 408.5]]
        .map(([text, y]) => `<span class="absolute left-[2px] -translate-y-1/2" style="top:${((y - 289) / 122) * 100}%">${text}</span>`)
        .join("");

      // time scale
      let times = `<span class="absolute top-px left-0 whitespace-nowrap">2 Sep 2022</span>`;
      for (let i = 0; i < 24; i++) {
        const m = 288 + i * 16;
        const clock = String(Math.floor(m / 60)).padStart(2, "0") + ":" + String(m % 60).padStart(2, "0");
        times += `<span class="absolute top-0 pt-px whitespace-nowrap before:absolute before:top-0 before:-left-px before:h-[2px] before:w-px before:bg-[#aaa]" style="left:${((26 + (i * 80) / 3) / 778) * 100}%">2 Sep ${clock}</span>`;
      }
      document.getElementById("times").innerHTML = times;
    </script>
  </body>
</html>
